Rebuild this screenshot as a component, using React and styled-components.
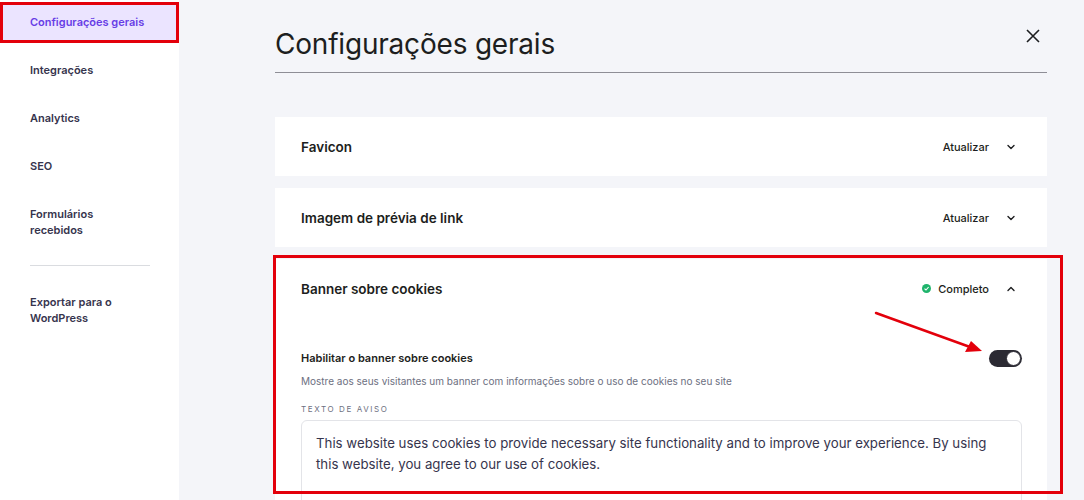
import React from "react";
import styled, { createGlobalStyle } from "styled-components";

const Global = createGlobalStyle`
  html, body { margin: 0; padding: 0; }
  body {
    font-family: Inter, "Noto Sans", sans-serif;
    background: #f4f5f9;
    color: #1d1e20;
    overflow: hidden;
  }
`;

const Layout = styled.div`
  display: flex;
  width: 1084px;
  height: 500px;
  overflow: hidden;
  position: relative;
`;

const Sidebar = styled.nav`
  width: 179px;
  flex-shrink: 0;
  background: #fff;
  padding-top: 4px;
  display: flex;
  flex-direction: column;
`;

const NavItem = styled.div`
  position: relative;
  flex-shrink: 0;
  padding: ${(p) => (p.$double ? "10px 20px 10px 30px" : "0 20px 0 30px")};
  min-height: ${(p) => (p.$double ? "auto" : "36px")};
  display: flex;
  align-items: center;
  margin-bottom: 12px;
  font-size: 11px;
  font-weight: 600;
  line-height: 16px;
  background: ${(p) => (p.$active ? "#ebe4ff" : "transparent")};
  color: ${(p) => (p.$active ? "#673de6" : "#36344d")};
`;

const NavDivider = styled.hr`
  flex-shrink: 0;
  border: 0;
  border-top: 1px solid #dadce0;
  margin: 5px 29px 18px 30px;
`;

const Highlight = styled.div`
  position: absolute;
  border: 3px solid #e3000b;
  pointer-events: none;
  box-sizing: border-box;
`;

const Main = styled.main`
  flex: 1;
  padding: 0 37px 0 96px;
  display: flex;
  flex-direction: column;
  & > * { flex-shrink: 0; }
`;

const Header = styled.header`
  height: 73px;
  border-bottom: 1px solid #8e8e96;
  display: flex;
  align-items: center;
  justify-content: space-between;
  box-sizing: border-box;
  padding-top: 16px;
  margin-bottom: 44px;
`;

const Title = styled.h1`
  margin: 0;
  font-size: 28px;
  font-weight: 400;
  color: #1d1e20;
  letter-spacing: -0.2px;
`;

const CloseButton = styled.button`
  border: 0;
  background: none;
  padding: 0;
  width: 16px;
  height: 16px;
  margin-right: 6px;
  margin-bottom: 16px;
  display: flex;
  color: #1d1e20;
`;

const Card = styled.section`
  position: relative;
  background: #fff;
  margin-bottom: 12px;
`;

const CardHead = styled.div`
  height: 59px;
  display: flex;
  align-items: center;
  justify-content: space-between;
  padding: 0 31px 0 26px;
`;

const CardTitle = styled.h2`
  margin: 0;
  font-size: 13.5px;
  font-weight: 600;
  color: #1d1e20;
`;

const CardAction = styled.div`
  display: flex;
  align-items: center;
  gap: 17px;
  font-size: 11px;
  font-weight: 500;
  color: #1d1e20;
`;

const Status = styled.span`
  display: flex;
  align-items: center;
  gap: 7px;
`;

const Dot = styled.span`
  width: 9px;
  height: 9px;
  border-radius: 50%;
  background: #1fb46c;
  display: flex;
  align-items: center;
  justify-content: center;
`;

const CardBody = styled.div`
  padding: 32px 25px 0 26px;
`;

const ToggleRow = styled.div`
  display: flex;
  justify-content: space-between;
  align-items: flex-start;
`;

const ToggleLabel = styled.div`
  font-size: 11px;
  font-weight: 600;
  color: #1d1e20;
  line-height: 16px;
`;

const ToggleHint = styled.div`
  font-size: 10px;
  color: #6d7081;
  margin-top: 9px;
`;

const Toggle = styled.span`
  width: 33px;
  height: 17px;
  border-radius: 9px;
  background: #2b2a33;
  position: relative;
  &::after {
    content: "";
    position: absolute;
    right: 1px;
    top: 1px;
    width: 13px;
    height: 13px;
    border-radius: 50%;
    background: #fff;
    border: 1px solid #2b2a33;
  }
`;

const FieldLabel = styled.div`
  margin-top: 17px;
  font-size: 8px;
  letter-spacing: 1.6px;
  color: #6d7081;
  text-transform: uppercase;
`;

const TextBox = styled.div`
  margin-top: 6px;
  border: 1px solid #e3e4e8;
  border-radius: 6px;
  padding: 12px 14px 40px;
  font-size: 13.25px;
  line-height: 21px;
  color: #36344d;
`;

const Chevron = ({ up }) => (
  <svg width="10" height="10" viewBox="0 0 10 10" fill="none">
    <path
      d={up ? "M2 6.5 L5 3.5 L8 6.5" : "M2 3.5 L5 6.5 L8 3.5"}
      stroke="#1d1e20"
      strokeWidth="1.4"
      strokeLinecap="round"
      strokeLinejoin="round"
    />
  </svg>
);

const Arrow = styled.svg`
  position: absolute;
  left: 870px;
  top: 308px;
  pointer-events: none;
`;

export default function App() {
  return (
    <>
      <Global />
      <Layout>
        <Sidebar>
          <NavItem $active>Configurações gerais</NavItem>
          <NavItem>Integrações</NavItem>
          <NavItem>Analytics</NavItem>
          <NavItem>SEO</NavItem>
          <NavItem $double>
            Formulários
            <br />
            recebidos
          </NavItem>
          <NavDivider />
          <NavItem $double>
            Exportar para o
            <br />
            WordPress
          </NavItem>
        </Sidebar>
        <Main>
          <Header>
            <Title>Configurações gerais</Title>
            <CloseButton aria-label="Fechar">
              <svg width="16" height="16" viewBox="0 0 16 16">
                <path d="M2 2 L14 14 M14 2 L2 14" stroke="#1d1e20" strokeWidth="1.6" />
              </svg>
            </CloseButton>
          </Header>
          <Card>
            <CardHead>
              <CardTitle>Favicon</CardTitle>
              <CardAction>
                Atualizar
                <Chevron />
              </CardAction>
            </CardHead>
          </Card>
          <Card>
            <CardHead>
              <CardTitle>Imagem de prévia de link</CardTitle>
              <CardAction>
                Atualizar
                <Chevron />
              </CardAction>
            </CardHead>
          </Card>
          <Card>
            <CardHead>
              <CardTitle>Banner sobre cookies</CardTitle>
              <CardAction>
                <Status>
                  <Dot>
                    <svg width="7" height="7" viewBox="0 0 7 7">
                      <path d="M1.5 3.6 L3 5 L5.6 2" stroke="#fff" strokeWidth="1.1" fill="none" />
                    </svg>
                  </Dot>
                  Completo
                </Status>
                <Chevron up />
              </CardAction>
            </CardHead>
            <CardBody>
              <ToggleRow>
                <div>
                  <ToggleLabel>Habilitar o banner sobre cookies</ToggleLabel>
                  <ToggleHint>
                    Mostre aos seus visitantes um banner com informações sobre o uso de cookies no seu site
                  </ToggleHint>
                </div>
                <Toggle />
              </ToggleRow>
              <FieldLabel>Texto de aviso</FieldLabel>
              <TextBox>
                This website uses cookies to provide necessary site functionality and to improve your experience. By using
                this website, you agree to our use of cookies.
              </TextBox>
            </CardBody>
          </Card>
        </Main>
        <Highlight style={{ left: 0, top: 2, width: 179, height: 41 }} />
        <Highlight style={{ left: 273, top: 255, width: 790, height: 239 }} />
        <Arrow width="120" height="50" viewBox="0 0 120 50">
          <path d="M6 5 L100 39" stroke="#e3000b" strokeWidth="2.5" strokeLinecap="round" />
          <path d="M112 43 L95 44 L101 33 Z" fill="#e3000b" />
        </Arrow>
      </Layout>
    </>
  );
}
